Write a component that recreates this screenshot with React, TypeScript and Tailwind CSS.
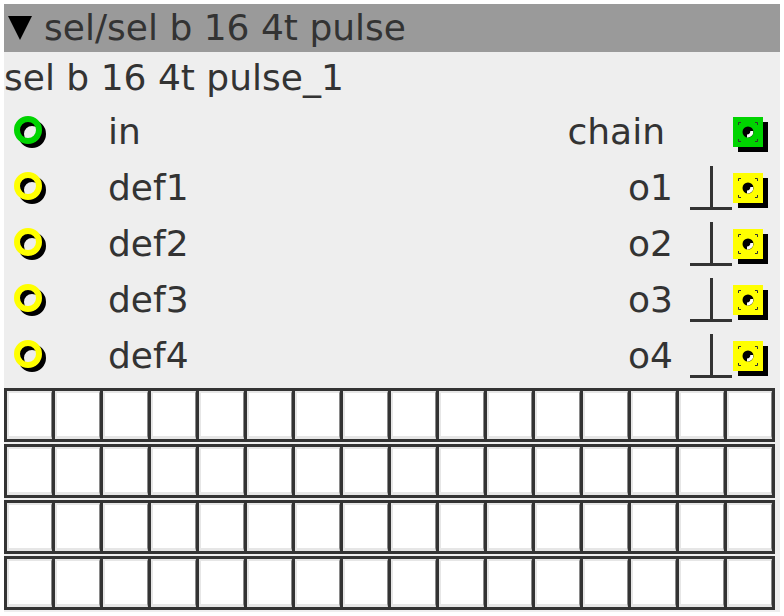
import React from "react";

const FONT = { fontFamily: '"DejaVu Sans", "Noto Sans", sans-serif' };

function Inlet({ color }: { color: string }) {
  return (
    <div className="relative w-[32px] h-[32px] ml-[10px]">
      <div className="absolute left-[4px] top-[4px] w-[28px] h-[28px] rounded-full border-[6px] border-black" />
      <div
        className={
          "absolute left-0 top-0 w-[28px] h-[28px] rounded-full border-[6px] " +
          (color === "green" ? "border-[#00d400]" : "border-[#ffff00]")
        }
      />
    </div>
  );
}

function Outlet({ color }: { color: string }) {
  return (
    <div className="relative w-[30px] h-[30px] mr-[17px] shrink-0">
      <div className="absolute left-[5px] top-[5px] w-[30px] h-[30px] bg-black" />
      <div
        className={
          "absolute left-0 top-0 w-[30px] h-[30px] " +
          (color === "green" ? "bg-[#00d400]" : "bg-[#ffff00]")
        }
      >
        <svg width="30" height="30" viewBox="0 0 30 30" className="block">
          <g stroke="#333" strokeWidth="1" fill="none">
            <path d="M5.5 8 V5.5 H8" />
            <path d="M22 5.5 H24.5 V8" />
            <path d="M5.5 22 V24.5 H8" />
            <path d="M22 24.5 H24.5 V22" />
          </g>
          <circle cx="15" cy="15" r="5.5" fill="#000" />
          <path d="M20.2 14 A5.5 5.5 0 0 1 14 20.4 L14 17.5 A3.5 3.5 0 0 0 17.3 14 Z" fill="#fff" />
        </svg>
      </div>
    </div>
  );
}

function Tee() {
  return (
    <svg width="42" height="44" viewBox="0 0 42 44" className="block ml-[17px] shrink-0">
      <line x1="21.5" y1="0" x2="21.5" y2="44" stroke="#333" strokeWidth="3" />
      <line x1="0" y1="42.5" x2="42" y2="42.5" stroke="#333" strokeWidth="3" />
    </svg>
  );
}

function Row({
  inColor,
  label,
  outLabel,
  outColor,
  tee,
}: {
  inColor: string;
  label: string;
  outLabel: string;
  outColor: string;
  tee: boolean;
}) {
  return (
    <div className="flex items-center h-[56px]">
      <Inlet color={inColor} />
      <div className="ml-[62px] text-[36px] leading-none text-[#333]">{label}</div>
      <div className="ml-auto text-[36px] leading-none text-[#333]">{outLabel}</div>
      {tee ? <Tee /> : <div className="w-[68px] shrink-0" />}
      {tee ? <div className="w-[1px] shrink-0" /> : null}
      <Outlet color={outColor} />
    </div>
  );
}

function GridRow() {
  const cells = Array.from({ length: 16 });
  return (
    <div className="flex border-[3px] border-[#333] w-fit bg-[#333]">
      {cells.map((_, i) => (
        <div
          key={i}
          className={
            "w-[45px] h-[48px] bg-white border-l-2 border-t-2 border-b-[3px] border-r border-l-[#e6e6e6] border-t-[#e6e6e6] border-b-[#e6e6e6] border-r-[#8a8a8a]" +
            (i < 15 ? " mr-[3px]" : "")
          }
        />
      ))}
    </div>
  );
}

export default function App() {
  return (
    <div className="w-[784px] h-[616px] bg-white pt-[4px] pl-[4px]" style={FONT}>
      <div className="w-[776px] bg-[#eeeeee] pb-[2px]">
        <div className="h-[48px] bg-[#9a9a9a] flex items-center text-[36px] leading-none text-[#333] whitespace-pre">
          <svg width="24" height="24" viewBox="0 0 24 24" className="block ml-[4px] mr-[12px] shrink-0">
            <path d="M0 0 H24 L12 24 Z" fill="#000" />
          </svg>
          <span>sel/sel b 16 4t pulse</span>
        </div>
        <div className="h-[52px] flex items-center text-[36px] leading-none text-[#333]">
          sel b 16 4t pulse_1
        </div>
        <Row inColor="green" label="in" outLabel="chain" outColor="green" tee={false} />
        <Row inColor="yellow" label="def1" outLabel="o1" outColor="yellow" tee />
        <Row inColor="yellow" label="def2" outLabel="o2" outColor="yellow" tee />
        <Row inColor="yellow" label="def3" outLabel="o3" outColor="yellow" tee />
        <Row inColor="yellow" label="def4" outLabel="o4" outColor="yellow" tee />
        <div className="mt-[4px] flex flex-col gap-[2px]">
          <GridRow />
          <GridRow />
          <GridRow />
          <GridRow />
        </div>
      </div>
    </div>
  );
}
